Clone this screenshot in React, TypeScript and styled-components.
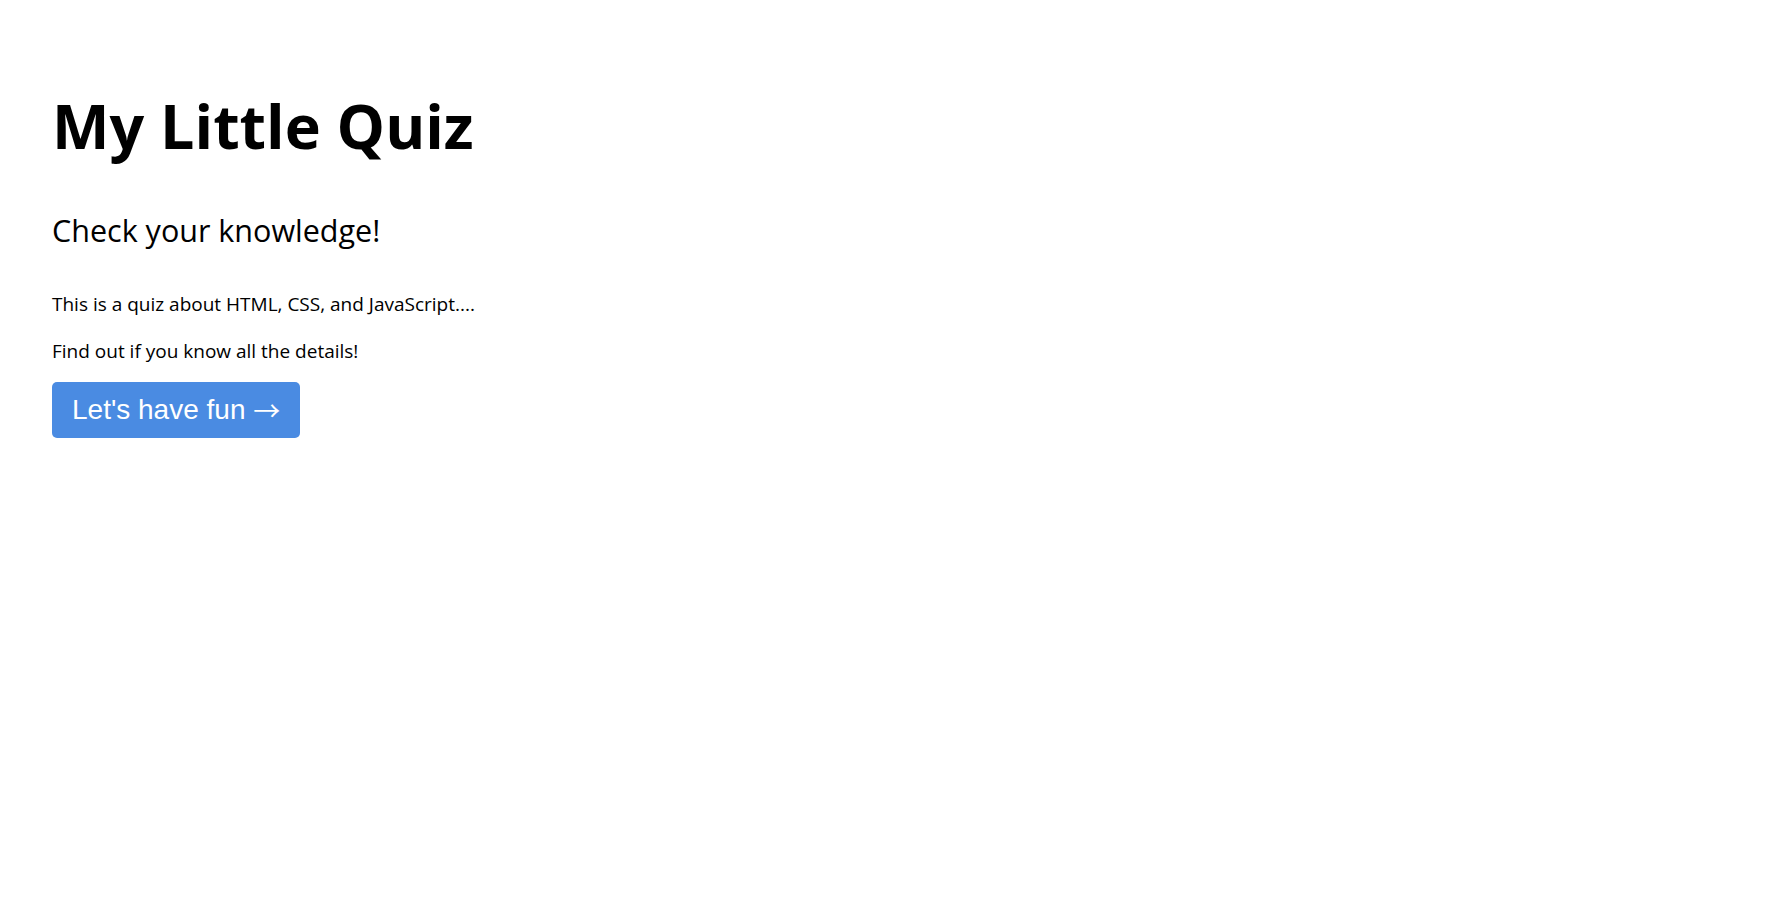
import React from "react";
import styled, { createGlobalStyle } from "styled-components";

const GlobalStyle = createGlobalStyle`
  html, body {
    margin: 0;
    padding: 0;
    background: #ffffff;
  }
  body {
    font-family: "Open Sans", "Noto Sans", sans-serif;
    color: #000;
  }
`;

const Page = styled.main`
  display: flex;
  flex-direction: column;
  align-items: flex-start;
  padding: 86px 52px;
`;

const Title = styled.h1`
  margin: 0;
  font-size: 61px;
  line-height: 80px;
  font-weight: 700;
`;

const Subtitle = styled.h2`
  margin: 44px 0 0;
  font-size: 30.5px;
  line-height: 40px;
  font-weight: 400;
`;

const Text = styled.p<{ $first?: boolean }>`
  margin: ${(p) => (p.$first ? "41px" : "21px")} 0 0;
  font-size: 19px;
  line-height: 26px;
`;

const StartButton = styled.button`
  margin-top: 18px;
  padding: 12px 20px;
  border: none;
  border-radius: 5px;
  background: #4a8be2;
  color: #fff;
  font-family: "Liberation Sans", Arial, sans-serif;
  font-size: 28px;
  line-height: 32px;
  cursor: pointer;
`;

const Arrow = styled.span`
  font-family: "Noto Sans CJK JP", "DejaVu Sans", sans-serif;
  font-size: 27px;
  line-height: 0;
  vertical-align: -2px;
`;

export default function App() {
  return (
    <>
      <GlobalStyle />
      <Page>
        <Title>My Little Quiz</Title>
        <Subtitle>Check your knowledge!</Subtitle>
        <Text $first>This is a quiz about HTML, CSS, and JavaScript....</Text>
        <Text>Find out if you know all the details!</Text>
        <StartButton>
          Let's have fun <Arrow>→</Arrow>
        </StartButton>
      </Page>
    </>
  );
}
